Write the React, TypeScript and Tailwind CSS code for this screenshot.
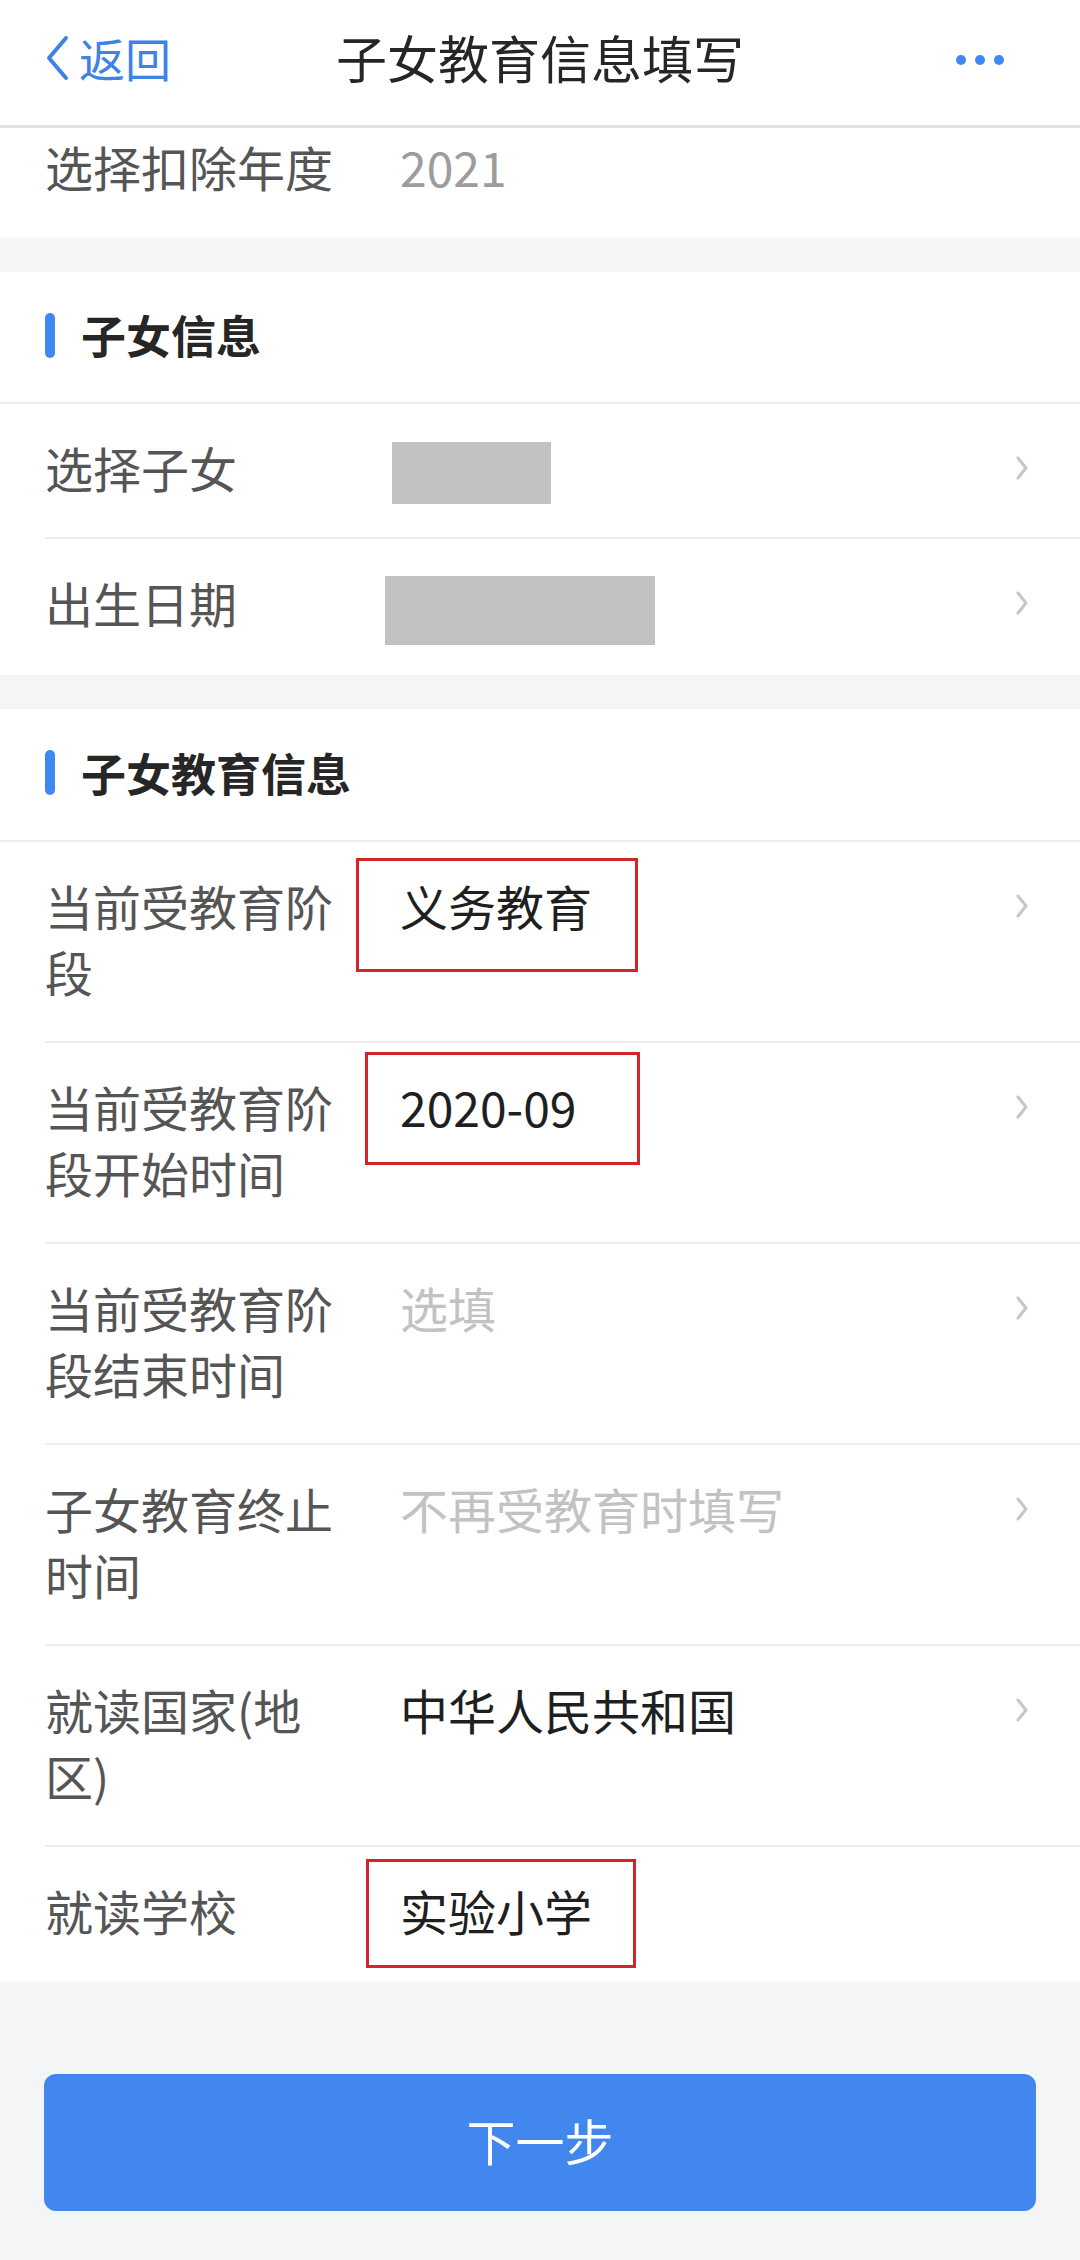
import React from "react";

type RowProps = {
  label: string[];
  value?: React.ReactNode;
  tone?: "dark" | "hint";
  height: string;
  last?: boolean;
  arrow?: boolean;
  box?: string;
};

const Chevron = () => (
  <svg width="16" height="26" viewBox="0 0 16 26" className="mt-[21px] shrink-0">
    <polyline points="4,3 12,13 4,23" fill="none" stroke="#c6c6c6" strokeWidth="3" strokeLinecap="round" strokeLinejoin="round" />
  </svg>
);

const Row = ({ label, value, tone = "dark", height, last, arrow = true, box }: RowProps) => {
  return (
    <div className="relative bg-white pl-[45px]">
      <div className={`flex items-start pt-[30px] pr-[50px] ${height} ${last ? "" : "border-b-2 border-[#eeeeee]"}`}>
        <div className="w-[300px] shrink-0 text-[48px] leading-[66px] text-[#555555]">
          {label.map((l, i) => (
            <div key={i}>{l}</div>
          ))}
        </div>
        <div className={`flex-1 pl-[55px] text-[48px] leading-[66px] ${tone === "hint" ? "text-[#c2c2c2]" : "text-[#1f1f1f]"}`}>
          {value}
        </div>
        {arrow && <Chevron />}
      </div>
      {box && <div className={`absolute border-[3px] border-[#d3232b] ${box}`}></div>}
    </div>
  );
};

const SectionTitle = ({ title, height }: { title: string; height: string }) => (
  <div className={`flex items-center bg-white pl-[45px] pb-[4px] border-b-2 border-[#eeeeee] ${height}`}>
    <div className="w-[10px] h-[45px] rounded-full bg-[#3f87f5]"></div>
    <p className="ml-[26px] text-[45px] font-bold text-[#262626]">{title}</p>
  </div>
);

export default function App() {
  return (
    <div className="w-[1080px] h-[2260px] overflow-hidden bg-[#f4f5f7] font-['Noto_Sans_CJK_SC','Noto_Sans',sans-serif]">
      {/* top bar */}
      <div className="grid grid-cols-[1fr_auto_1fr] items-center h-[128px] pb-[10px] bg-white border-b-[3px] border-[#e4e4e4]">
        <div className="flex items-center pl-[43px]">
          <svg width="28" height="46" viewBox="0 0 28 46">
            <polyline points="23,3 6,23 23,43" fill="none" stroke="#3f82e6" strokeWidth="4" strokeLinecap="round" strokeLinejoin="round" />
          </svg>
          <span className="ml-[8px] text-[46px] text-[#3f82e6]">返回</span>
        </div>
        <p className="text-[51px] text-[#262626]">子女教育信息填写</p>
        <div className="flex justify-end gap-[9px] pr-[76px] pt-[4px]">
          <span className="w-[10px] h-[10px] rounded-full bg-[#3f87f5]"></span>
          <span className="w-[10px] h-[10px] rounded-full bg-[#3f87f5]"></span>
          <span className="w-[10px] h-[10px] rounded-full bg-[#3f87f5]"></span>
        </div>
      </div>

      <div className="flex items-start h-[110px] pt-[5px] pl-[45px] bg-white">
        <div className="w-[300px] shrink-0 text-[48px] leading-[66px] text-[#555555]">选择扣除年度</div>
        <div className="pl-[55px] text-[48px] leading-[66px] text-[#9c9c9c]">2021</div>
      </div>

      <div className="h-[34px]"></div>

      <SectionTitle title="子女信息" height="h-[132px]" />
      <Row
        label={["选择子女"]}
        height="h-[135px]"
        value={<div className="-ml-[8px] mt-[8px] w-[159px] h-[62px] bg-[#c2c2c2]"></div>}
      />
      <Row
        label={["出生日期"]}
        height="h-[136px]"
        last
        value={<div className="-ml-[15px] mt-[7px] w-[270px] h-[69px] bg-[#c2c2c2]"></div>}
      />

      <div className="h-[34px]"></div>

      <SectionTitle title="子女教育信息" height="h-[133px]" />
      <Row
        label={["当前受教育阶", "段"]}
        value="义务教育"
        height="h-[201px]"
        box="left-[356px] top-[16px] w-[282px] h-[114px]"
      />
      <Row
        label={["当前受教育阶", "段开始时间"]}
        value="2020-09"
        height="h-[201px]"
        box="left-[365px] top-[9px] w-[275px] h-[113px]"
      />
      <Row label={["当前受教育阶", "段结束时间"]} value="选填" tone="hint" height="h-[201px]" />
      <Row label={["子女教育终止", "时间"]} value="不再受教育时填写" tone="hint" height="h-[201px]" />
      <Row label={["就读国家(地", "区)"]} value="中华人民共和国" height="h-[201px]" />
      <Row
        label={["就读学校"]}
        value="实验小学"
        height="h-[135px]"
        last
        arrow={false}
        box="left-[366px] top-[12px] w-[270px] h-[109px]"
      />

      <div className="h-[92px]"></div>
      <div className="mx-[44px] h-[137px] pb-[6px] rounded-[12px] bg-[#4287ee] flex items-center justify-center">
        <span className="text-[49px] text-white">下一步</span>
      </div>
    </div>
  );
}
